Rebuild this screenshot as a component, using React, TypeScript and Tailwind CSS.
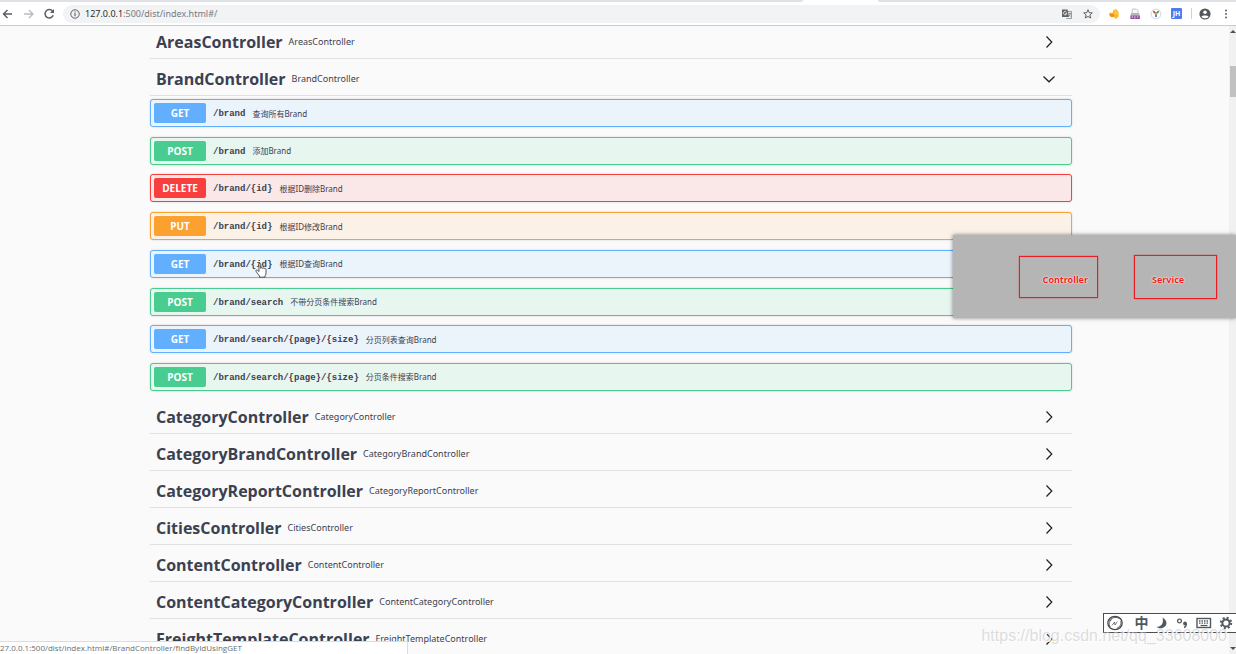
import type { ReactNode } from 'react';
import clsx from 'clsx';

type Method = 'GET' | 'POST' | 'DELETE' | 'PUT';

type Operation = {
  method: Method;
  path: string;
  summary: string;
};

const METHOD_STYLES: Record<Method, { row: string; badge: string }> = {
  GET: { row: 'border-[#61affe] bg-[#ebf3fb]', badge: 'bg-[#61affe]' },
  POST: { row: 'border-[#49cc90] bg-[#e8f6f0]', badge: 'bg-[#49cc90]' },
  DELETE: { row: 'border-[#f93e3e] bg-[#fae7e7]', badge: 'bg-[#f93e3e]' },
  PUT: { row: 'border-[#fca130] bg-[#fbf1e6]', badge: 'bg-[#fca130]' },
};

const BRAND_OPERATIONS: Operation[] = [
  { method: 'GET', path: '/brand', summary: '查询所有Brand' },
  { method: 'POST', path: '/brand', summary: '添加Brand' },
  { method: 'DELETE', path: '/brand/{id}', summary: '根据ID删除Brand' },
  { method: 'PUT', path: '/brand/{id}', summary: '根据ID修改Brand' },
  { method: 'GET', path: '/brand/{id}', summary: '根据ID查询Brand' },
  { method: 'POST', path: '/brand/search', summary: '不带分页条件搜索Brand' },
  { method: 'GET', path: '/brand/search/{page}/{size}', summary: '分页列表查询Brand' },
  { method: 'POST', path: '/brand/search/{page}/{size}', summary: '分页条件搜索Brand' },
];

const COLLAPSED_TAGS = [
  'CategoryController',
  'CategoryBrandController',
  'CategoryReportController',
  'CitiesController',
  'ContentController',
  'ContentCategoryController',
  'FreightTemplateController',
];

function IconButton({ label, children }: { label: string; children: ReactNode }) {
  return (
    <button type="button" aria-label={label} className="flex size-4 shrink-0 items-center justify-center">
      {children}
    </button>
  );
}

function BrowserBar() {
  return (
    <header className="relative z-10 shrink-0 border-b border-[#c8cacc] bg-white">
      <div className="flex h-[2px]">
        <div className="w-[65%] rounded-br-sm bg-[#dee1e6]" />
        <div className="w-[6%]" />
        <div className="flex-1 rounded-bl-sm bg-[#dee1e6]" />
      </div>
      <div className="flex h-[23px] items-center pr-[2px]">
        <div className="flex items-center gap-[5px] pr-[5px]">
          <IconButton label="Back">
            <svg viewBox="0 0 16 16" className="size-4" fill="none" stroke="#5a5d61" strokeWidth="1.4">
              <path d="M12 8H3.5M7.5 4 3.5 8l4 4" />
            </svg>
          </IconButton>
          <IconButton label="Forward">
            <svg viewBox="0 0 16 16" className="size-4" fill="none" stroke="#b9bbbe" strokeWidth="1.3">
              <path d="M3 8h9M8 4l4 4-4 4" />
            </svg>
          </IconButton>
          <IconButton label="Reload">
            <svg viewBox="0 0 16 16" className="size-4" fill="none" stroke="#5a5d61" strokeWidth="1.5">
              <path d="M10.6 5.200A4.2 4.2 0 1 0 11.200 9.200" />
              <path d="M12 3v4H8z" fill="#5a5d61" stroke="none" />
            </svg>
          </IconButton>
        </div>
        <div className="flex h-[18px] flex-1 items-center gap-[5px] rounded-full bg-[#f1f3f4] px-1">
          <svg viewBox="0 0 16 16" className="size-4 shrink-0" fill="none" stroke="#5f6368">
            <circle cx="8" cy="8" r="4.2" />
            <path d="M8 7.2v3M8 5.4v1" strokeWidth="1.2" />
          </svg>
          <div className="-ml-[3px] flex-1 font-['Noto_Sans',sans-serif] text-[9px] leading-4 text-[#77797d]">
            <span className="text-[#2a2c2f]">127.0.0.1</span>:500/dist/index.html#/
          </div>
          <IconButton label="Translate">
            <svg viewBox="0 0 16 16" className="size-4">
              <path d="M7.500 5.500h5v7H7.2" fill="#f1f3f4" stroke="#808388" strokeWidth="0.8" />
              <path d="M3 3.500h5.600l1.400 7.500H3z" fill="#5f6368" />
              <path d="M9.700 7.500h2.300M10.700 6.800v.8M11.400 7.600c-.3 1.400-.7 2.200-1.200 2.600M10 8.600c.4.900.9 1.500 1.700 1.900" fill="none" stroke="#707378" strokeWidth="0.7" />
              <path d="M7.600 6.300a1.700 1.700 0 1 0 .2 1.200H6.400" fill="none" stroke="#fff" strokeWidth="0.8" />
            </svg>
          </IconButton>
          <IconButton label="Bookmark this page">
            <svg viewBox="0 0 16 16" className="size-4" fill="none" stroke="#5f6368">
              <path d="m8 3.7 1.2 2.9 3.1.3-2.4 2 .8 3.1L8 10.4 5.3 12l.8-3.1-2.4-2 3.1-.3z" />
            </svg>
          </IconButton>
        </div>
        <div className="flex items-center gap-[5px] pl-[6px]">
          <IconButton label="Shell extension">
            <svg viewBox="0 0 16 16" className="size-4">
              <path d="M7 4.2 10 3l2.6 3v4.5L10 13l-2.4-2H5L3 8.4l.6-1.6L7 6.5z" fill="#fbb829" />
              <path d="m3 8.2 4-.5 1.5 1.8-1 1.5H5z" fill="#f08c1e" />
              <path d="m9 4 1 4 2.4-1.8" fill="none" stroke="#fdd978" strokeWidth="0.8" />
            </svg>
          </IconButton>
          <IconButton label="PDF extension">
            <svg viewBox="0 0 16 16" className="size-4">
              <path d="M5.3 3h4l1.8 1.8V9H5.3z" fill="#f5f5f7" stroke="#aeb0b5" strokeWidth="0.7" />
              <path d="M4.2 7h7.8l.8 2.500H3.4z" fill="#b4b5ba" />
              <rect x="3.4" y="9.500" width="9.4" height="3.500" fill="#85439a" />
              <path d="M4.9 12.300v-2h1v1h-1M7.4 10.300v2c1.6 0 1.6-2 0-2M10.2 12.300v-2h1.4M10.2 11.300h1.1" fill="none" stroke="#e6cdee" strokeWidth="0.6" />
            </svg>
          </IconButton>
          <IconButton label="Y extension">
            <svg viewBox="0 0 16 16" className="size-4" fill="none" strokeWidth="1.8">
              <circle cx="8" cy="8" r="4.9" fill="#fff" stroke="#c9ccd0" strokeWidth="0.8" />
              <path d="M8 7.500v3.600" stroke="#3f74e8" />
              <path d="M8.300 8.200 5.300 5.2" stroke="#e5443b" />
              <path d="m8 8 2.7-2.8" stroke="#35a854" />
              <circle cx="8" cy="7.800" r="1" fill="#f6b32b" />
            </svg>
          </IconButton>
          <button type="button" className="mx-[2px] flex h-[11px] w-[11px] items-center justify-center rounded-[1px] bg-[#4c7df0] text-[7px] leading-none font-bold text-white">
            JH
          </button>
          <div className="ml-[2px] h-[11px] w-px bg-[#cfd1d4]" />
          <IconButton label="Profile">
            <svg viewBox="0 0 16 16" className="size-4">
              <circle cx="8" cy="8" r="5.6" fill="#54575b" />
              <circle cx="8" cy="6.2" r="1.8" fill="#fff" />
              <path d="M4.4 10.8c.8-1.7 6.4-1.7 7.2 0-1.8 2-5.4 2-7.2 0z" fill="#fff" />
            </svg>
          </IconButton>
          <IconButton label="Menu">
            <svg viewBox="0 0 16 16" className="size-4" fill="#5f6368">
              <circle cx="8" cy="4.5" r="1" />
              <circle cx="8" cy="8" r="1" />
              <circle cx="8" cy="11.5" r="1" />
            </svg>
          </IconButton>
        </div>
      </div>
    </header>
  );
}

function TagHeader({ name, open = false }: { name: string; open?: boolean }) {
  return (
    <button
      type="button"
      aria-expanded={open}
      className="flex h-[37px] w-full shrink-0 items-center border-b border-[#dfe0e3] pt-[4px] pr-[16px] pl-[6px] text-left whitespace-nowrap text-[#3b4151]"
    >
      <span className="text-[16px] leading-5 font-bold">{name}</span>
      <span className="flex-1 pl-[6px] font-['Noto_Sans',sans-serif] text-[9px] leading-4">{name}</span>
      <svg viewBox="0 0 14 14" className="size-[14px]" fill="none" stroke="#1d1f23" strokeWidth="1.2">
        <path d={open ? 'M1.500 4.500 7 9.800l5.500-5.300' : 'M4.500 1.500 9.800 7l-5.300 5.500'} />
      </svg>
    </button>
  );
}

function OperationRow({ method, path, summary }: Operation) {
  const styles = METHOD_STYLES[method];

  return (
    <button
      type="button"
      className={clsx(
        'flex h-[28px] w-full items-center rounded-[3px] border px-[3px] text-left whitespace-nowrap text-[#3b4151] shadow-[0_0_2px_rgba(0,0,0,0.19)]',
        styles.row,
      )}
    >
      <span
        className={clsx(
          'min-w-[52px] rounded-[2px] text-center text-[10px] leading-5 font-bold text-white',
          styles.badge,
        )}
      >
        {method}
      </span>
      <span className="pt-[2px] pl-[7px] font-['Liberation_Mono',monospace] text-[9px] leading-4 font-bold">{path}</span>
      <span className="pt-px pl-[7px] font-['Noto_Sans','Noto_Sans_CJK_SC',sans-serif] text-[8px] leading-4">
        {summary}
      </span>
    </button>
  );
}

function NotePanel() {
  return (
    <aside className="absolute top-[235px] right-0 z-20 flex h-[83px] w-[283px] items-center gap-[36px] bg-[#b5b5b5] pl-[66px] font-['Noto_Sans',sans-serif] text-[9px] leading-4 font-bold text-[#ed1c24] shadow-[0_0_4px_rgba(0,0,0,0.5)] [text-shadow:0_0_2px_#fff,0_0_1px_#fff]">
      <div className="flex h-[42px] w-[79px] items-center justify-end border border-[#ed1c24] pt-[6px] pr-[9px] shadow-[0_0_1px_#ed1c24]">
        Controller
      </div>
      <div className="flex h-[44px] w-[83px] items-center border border-[#ed1c24] pt-[6px] pl-[17px] shadow-[0_0_1px_#ed1c24]">
        Service
      </div>
    </aside>
  );
}

function InputMethodBar() {
  return (
    <div className="absolute right-0 bottom-[21px] z-20 flex h-[20px] w-[133px] items-center justify-between border border-r-0 border-[#4c4e52] bg-white pr-[3px] pl-[2px] text-[#4f5a60]">
      <svg viewBox="0 0 18 18" className="size-[18px]" fill="none" stroke="#444a4f">
        <ellipse cx="9" cy="9" rx="7.200" ry="6.600" strokeWidth="1.300" />
        <path d="M3.500 7c2-4 8-5 11-1.500M4.200 13c-2-3-1-6 1.500-7.500M14.800 7c.8 3-.8 6-4 7.200" strokeWidth="0.900" />
        <path d="m6 11.500 2.500-3.500.5 3 2.300-3.500" strokeWidth="0.700" />
      </svg>
      <span className="pl-[4px] text-[14px] leading-4 font-bold">中</span>
      <svg viewBox="0 0 14 14" className="size-[14px]" fill="currentColor">
        <path d="M7.500 1.500c5 3 5.500 8 .5 10.300-2.500 1-5 .5-6.500-1C6.500 11 9 7 7.500 1.500z" />
      </svg>
      <svg viewBox="0 0 14 14" className="size-[14px]" fill="none" stroke="currentColor">
        <circle cx="3.500" cy="5" r="1.900" strokeWidth="1.300" />
        <circle cx="9" cy="7.500" r="1.900" fill="currentColor" stroke="none" />
        <path d="M10.200 7.500c.2 2-.6 3.300-2.200 4" strokeWidth="1.400" />
      </svg>
      <svg viewBox="0 0 16 14" className="h-[14px] w-[16px]" fill="none" stroke="currentColor">
        <rect x="1" y="2.500" width="13.500" height="9" strokeWidth="1.400" />
        <path d="M3 5h10M3 7.200h10" strokeWidth="1.300" strokeDasharray="1.500 1" />
        <path d="M4.500 9.500h7" strokeWidth="1.200" />
      </svg>
      <svg viewBox="0 0 14 14" className="size-[14px]" fill="none" stroke="currentColor">
        <circle cx="7" cy="7" r="3.600" strokeWidth="2" />
        <circle cx="7" cy="7" r="5.200" strokeWidth="2" strokeDasharray="2.040 2.040" />
      </svg>
    </div>
  );
}

function HandCursor() {
  return (
    <svg viewBox="0 0 12 16" className="absolute top-[262px] left-[255px] z-20 h-[16px] w-[12px]" fill="#fff" stroke="#2b2b2b">
      <path
        d="M4 9.500V2.300c0-1.300 1.700-1.300 1.700 0v4c.1-.9 1.700-.9 1.800.1.300-.8 1.700-.7 1.800.3.400-.6 1.700-.4 1.700.7V11c0 1.500-.6 2.200-1 3v1.200H4.500V14C3.400 12.700 2 11 1 9.200c-.5-1 .7-1.700 1.500-.9z"
        strokeWidth="0.800"
      />
    </svg>
  );
}

export default function App() {
  return (
    <div className="relative flex h-screen flex-col overflow-hidden bg-[#fafafa] font-['Open_Sans','Noto_Sans_CJK_SC',sans-serif]">
      <BrowserBar />

      <div className="flex min-h-0 flex-1">
        <main className="-mt-1 flex min-w-0 flex-1 flex-col pr-[157px] pl-[150px]">
          <TagHeader name="AreasController" />
          <TagHeader name="BrandController" open />
          <div className="mt-[3px] mb-[6px] flex min-h-[292px] flex-col justify-between">
            {BRAND_OPERATIONS.map((operation) => (
              <OperationRow key={`${operation.method} ${operation.path}`} {...operation} />
            ))}
          </div>
          {COLLAPSED_TAGS.map((name) => (
            <TagHeader key={name} name={name} />
          ))}
        </main>
        <div className="flex w-[7px] shrink-0 flex-col items-end bg-[#f1f1f1]">
          <svg viewBox="0 0 6 4" className="mt-[4px] h-[4px] w-[6px]" fill="#505050">
            <path d="M3 0 6 3H0z" />
          </svg>
          <div className="mt-[32px] h-[31px] w-[6px] bg-[#c1c1c1]" />
          <svg viewBox="0 0 6 4" className="mt-auto mb-[3px] h-[4px] w-[6px]" fill="#505050">
            <path d="M0 0h6L3 3z" />
          </svg>
        </div>
      </div>

      <HandCursor />
      <NotePanel />
      <InputMethodBar />

      <div className="absolute bottom-0 left-0 z-10 h-[13px] w-[408px] border-t border-r border-[#dcdcdc] bg-white text-[8px] leading-3 whitespace-nowrap text-[#6b6d70]">
        27.0.0.1:500/dist/index.html#/BrandController/findByIdUsingGET
      </div>
      <div className="pointer-events-none absolute right-[9px] bottom-[8px] z-30 font-['Liberation_Sans',sans-serif] text-[16px] leading-5 text-[#c8c8c8]/60 [text-shadow:1px_1px_0_#fff]">
        https://blog.csdn.net/qq_33608000
      </div>
    </div>
  );
}
